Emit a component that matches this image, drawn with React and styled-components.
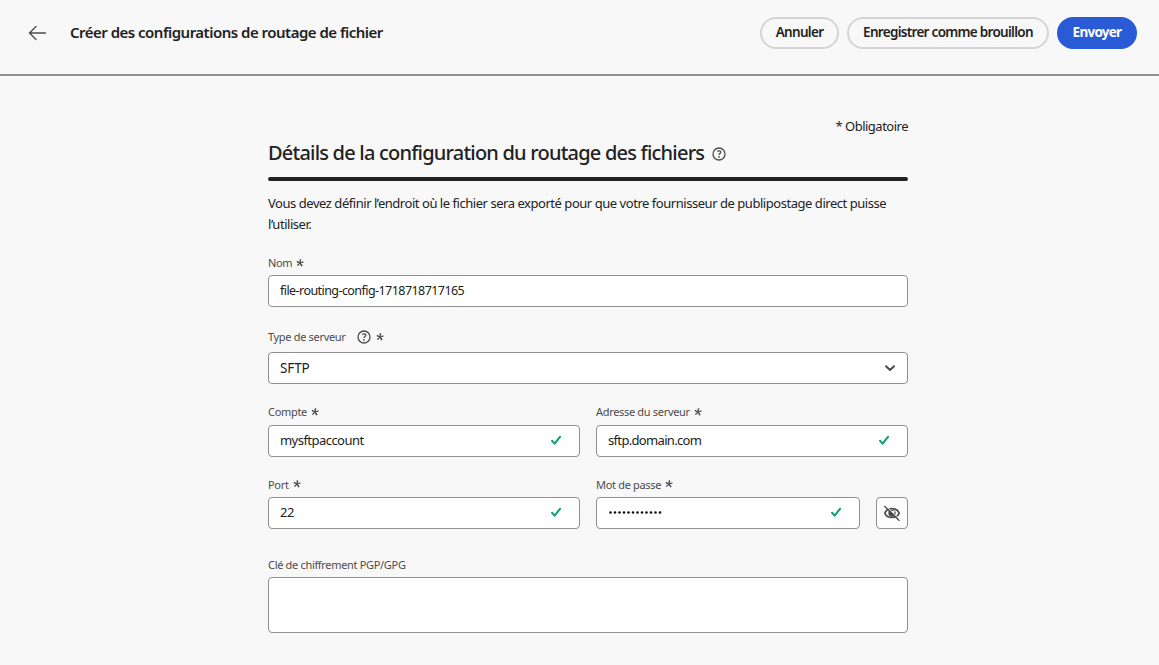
import React from "react";
import styled, { createGlobalStyle } from "styled-components";

const GlobalStyle = createGlobalStyle`
  *, *::before, *::after { box-sizing: border-box; }
  body {
    margin: 0;
    background: #f8f8f8;
    color: #222;
    font-family: "Noto Sans", "Open Sans", sans-serif;
    font-size: 13px;
    overflow: hidden;
  }
`;

const Page = styled.div`
  min-height: 665px;
  display: flex;
  flex-direction: column;
`;

const Header = styled.header`
  display: flex;
  align-items: flex-start;
  height: 76px;
  padding: 17px 22px 0 28px;
  border-bottom: 2px solid #909090;
`;

const BackButton = styled.button`
  display: flex;
  align-items: center;
  width: 42px;
  height: 32px;
  padding: 0;
  border: 0;
  background: none;
`;

const PageTitle = styled.h1`
  flex: 1;
  margin: 0;
  font-size: 15px;
  line-height: 31px;
  font-weight: 600;
  letter-spacing: -0.51px;
  white-space: nowrap;
`;

const Actions = styled.div`
  display: flex;
  gap: 8px;
`;

const Button = styled.button`
  width: ${(p) => p.$width}px;
  height: 32px;
  padding: 0 0 2px;
  border: 2px solid ${(p) => (p.$primary ? "#2a5bd7" : "#d5d5d5")};
  border-radius: 16px;
  background: ${(p) => (p.$primary ? "#2a5bd7" : "transparent")};
  color: ${(p) => (p.$primary ? "#fff" : "#222")};
  font-family: inherit;
  font-size: 13.5px;
  font-weight: ${(p) => (p.$primary ? 700 : 600)};
  letter-spacing: ${(p) => p.$spacing}px;
  white-space: nowrap;
`;

const Form = styled.main`
  width: 640px;
  margin: 40px 0 0 268px;
  display: flex;
  flex-direction: column;
`;

const RequiredNote = styled.div`
  align-self: flex-end;
  height: 21px;
  line-height: 21px;
  letter-spacing: -0.5px;
`;

const SectionTitle = styled.h2`
  display: flex;
  align-items: center;
  gap: 8px;
  height: 32px;
  margin: 0;
  font-size: 20px;
  line-height: 28px;
  font-weight: 500;
  letter-spacing: -0.79px;
  white-space: nowrap;

  svg { margin-top: 2px; }
`;

const Divider = styled.div`
  height: 4px;
  margin-top: 8px;
  border-radius: 2px;
  background: #222;
`;

const Intro = styled.p`
  margin: 12px 0 0;
  line-height: 21px;
  letter-spacing: -0.46px;
  white-space: nowrap;
`;

const Row = styled.div`
  display: flex;
  align-items: flex-end;
  gap: 16px;
  margin-top: ${(p) => p.$top}px;
`;

const Field = styled.div`
  flex: 1 1 0;
  min-width: 0;
`;

const Label = styled.label`
  display: flex;
  align-items: center;
  height: ${(p) => p.$height}px;
  margin-bottom: ${(p) => p.$below || 0}px;
  color: #4b4b4b;
  font-size: 11px;
  letter-spacing: -0.32px;
  white-space: nowrap;
`;

const LabelHelp = styled.span`
  display: flex;
  margin: 0 1px 0 11px;
`;

const Box = styled.div`
  display: flex;
  align-items: center;
  justify-content: space-between;
  height: ${(p) => p.$height || 32}px;
  padding: 0 ${(p) => p.$right || 18}px ${(p) => p.$bottom ?? 2}px 11px;
  border: 1px solid #909090;
  border-radius: 4px;
  background: #fff;
  font-size: ${(p) => p.$size || 13}px;
  letter-spacing: ${(p) => p.$spacing || 0}px;
`;

const IconButton = styled.button`
  display: flex;
  align-items: center;
  justify-content: center;
  width: 32px;
  height: 32px;
  padding: 0;
  border: 1px solid #909090;
  border-radius: 4px;
  background: #fdfdfd;
`;

const PasswordLine = styled.div`
  display: grid;
  grid-template-columns: 264px 32px;
  gap: 16px;
`;

const HelpGlyph = styled.svg`
  flex: none;
`;

const AsteriskGlyph = styled.svg`
  flex: none;
  margin-left: 4px;
`;

const PasswordDots = () => (
  <svg width="56" height="6" viewBox="0 0 56 6" fill="#111">
    {Array.from({ length: 12 }, (_, i) => (
      <circle key={i} cx={2.5 + i * 4.5} cy="3.5" r="1.3" />
    ))}
  </svg>
);

const Asterisk = () => (
  <AsteriskGlyph width="8" height="8" viewBox="0 0 8 8" fill="#4b4b4b">
    <path d="M6.575 6.555c.055.056.092.13 0 .2l-1.149.741c-.092.056-.129.019-.166-.074L3.834 4.94 1.963 7c-.019.037-.073.092-.129 0l-.889-.927c-.093-.055-.074-.111 0-.166l2.111-1.76L.648 3.24c-.037 0-.092-.074-.056-.167l.63-1.259a.097.097 0 0 1 .167-.036L3.5 3.148l.13-2.7a.1.1 0 0 1 .111-.111l1.537.2c.092 0 .111.037.092.13l-.63 2.54 2.5-.852c.056-.036.111-.018.13.074l.2 1.222c.018.056 0 .092-.055.111L4.9 4z" />
  </AsteriskGlyph>
);

const Help = () => (
  <HelpGlyph width="14" height="14" viewBox="0 0 14 14" fill="none" stroke="#4b4b4b">
    <circle cx="7" cy="7" r="6" strokeWidth="1.3" />
    <path d="M5.2 4.4c2-1.1 3.7-.5 3.6.9C8.7 6.5 7 6.6 7 8.1" strokeWidth="1.3" />
    <circle cx="7" cy="9.9" r="0.85" fill="#4b4b4b" stroke="none" />
  </HelpGlyph>
);

const Check = () => (
  <svg width="10" height="10" viewBox="0 0 10 10" fill="none" stroke="#12a573" strokeWidth="2.1" strokeLinecap="round" strokeLinejoin="round">
    <path d="M1.1 5.8 3.6 8.6 9 1.8" />
  </svg>
);

const Chevron = () => (
  <svg width="12" height="12" viewBox="0 0 12 12" fill="none" stroke="#4b4b4b" strokeWidth="2" strokeLinecap="round" strokeLinejoin="round">
    <path d="M2 4.2 6 8l4-3.8" />
  </svg>
);

const BackArrow = () => (
  <svg width="18" height="16" viewBox="0 0 18 16" fill="none" stroke="#4b4b4b" strokeWidth="1.3" strokeLinecap="round">
    <path d="M1.5 8H17.5M8 1.5 1.5 8 8 14.5" />
  </svg>
);

const EyeOff = () => (
  <svg width="18" height="18" viewBox="0 0 18 18" fill="none" stroke="#4b4b4b">
    <path d="M1.8 9.1C3 6.200 5.700 4.600 9 4.600s6 1.600 7.200 4.500C15 11.900 12.300 13.500 9 13.500s-6-1.600-7.200-4.400z" strokeWidth="1.6" />
    <circle cx="9" cy="9.1" r="3.7" fill="#4b4b4b" stroke="none" />
    <circle cx="10.3" cy="7.8" r="1.4" fill="#fdfdfd" stroke="none" />
    <path d="M2.4 1.200 17.200 15.800" stroke="#fdfdfd" strokeWidth="1" />
    <path d="M1.3 2 16.400 16.700" strokeWidth="1.300" />
  </svg>
);

export default function App() {
  return (
    <Page>
      <GlobalStyle />
      <Header>
        <BackButton aria-label="Retour"><BackArrow /></BackButton>
        <PageTitle>Créer des configurations de routage de fichier</PageTitle>
        <Actions>
          <Button $width={79} $spacing={-0.7}>Annuler</Button>
          <Button $width={202} $spacing={-0.7}>Enregistrer comme brouillon</Button>
          <Button $width={80} $spacing={-0.75} $primary>Envoyer</Button>
        </Actions>
      </Header>
      <Form>
        <RequiredNote>* Obligatoire</RequiredNote>
        <SectionTitle>
          <span>Détails de la configuration du routage des fichiers</span>
          <Help />
        </SectionTitle>
        <Divider />
        <Intro>
          Vous devez définir l’endroit où le fichier sera exporté pour que votre fournisseur de publipostage direct puisse
          <br />
          l’utiliser.
        </Intro>
        <Row $top={16}>
          <Field>
            <Label $height={23} $below={1}>Nom<Asterisk /></Label>
            <Box $bottom={1} $size={12.5} $spacing={-0.56}>file-routing-config-1718718717165</Box>
          </Field>
        </Row>
        <Row $top={14}>
          <Field>
            <Label $height={31}>
              Type de serveur
              <LabelHelp><Help /></LabelHelp>
              <Asterisk />
            </Label>
            <Box $right={11} $bottom={0} $size={13.5} $spacing={-0.1}>SFTP<Chevron /></Box>
          </Field>
        </Row>
        <Row $top={14}>
          <Field>
            <Label $height={27}>Compte<Asterisk /></Label>
            <Box $spacing={-0.54}>mysftpaccount<Check /></Box>
          </Field>
          <Field>
            <Label $height={27}>Adresse du serveur<Asterisk /></Label>
            <Box $spacing={-0.67}>sftp.domain.com<Check /></Box>
          </Field>
        </Row>
        <Row $top={14}>
          <Field>
            <Label $height={26}>Port<Asterisk /></Label>
            <Box $spacing={-0.4}>22<Check /></Box>
          </Field>
          <Field>
            <Label $height={26}>Mot de passe<Asterisk /></Label>
            <PasswordLine>
              <Box>
                <PasswordDots />
                <Check />
              </Box>
              <IconButton aria-label="Afficher le mot de passe"><EyeOff /></IconButton>
            </PasswordLine>
          </Field>
        </Row>
        <Row $top={22}>
          <Field>
            <Label $height={26}>Clé de chiffrement PGP/GPG</Label>
            <Box $height={56} />
          </Field>
        </Row>
      </Form>
    </Page>
  );
}
